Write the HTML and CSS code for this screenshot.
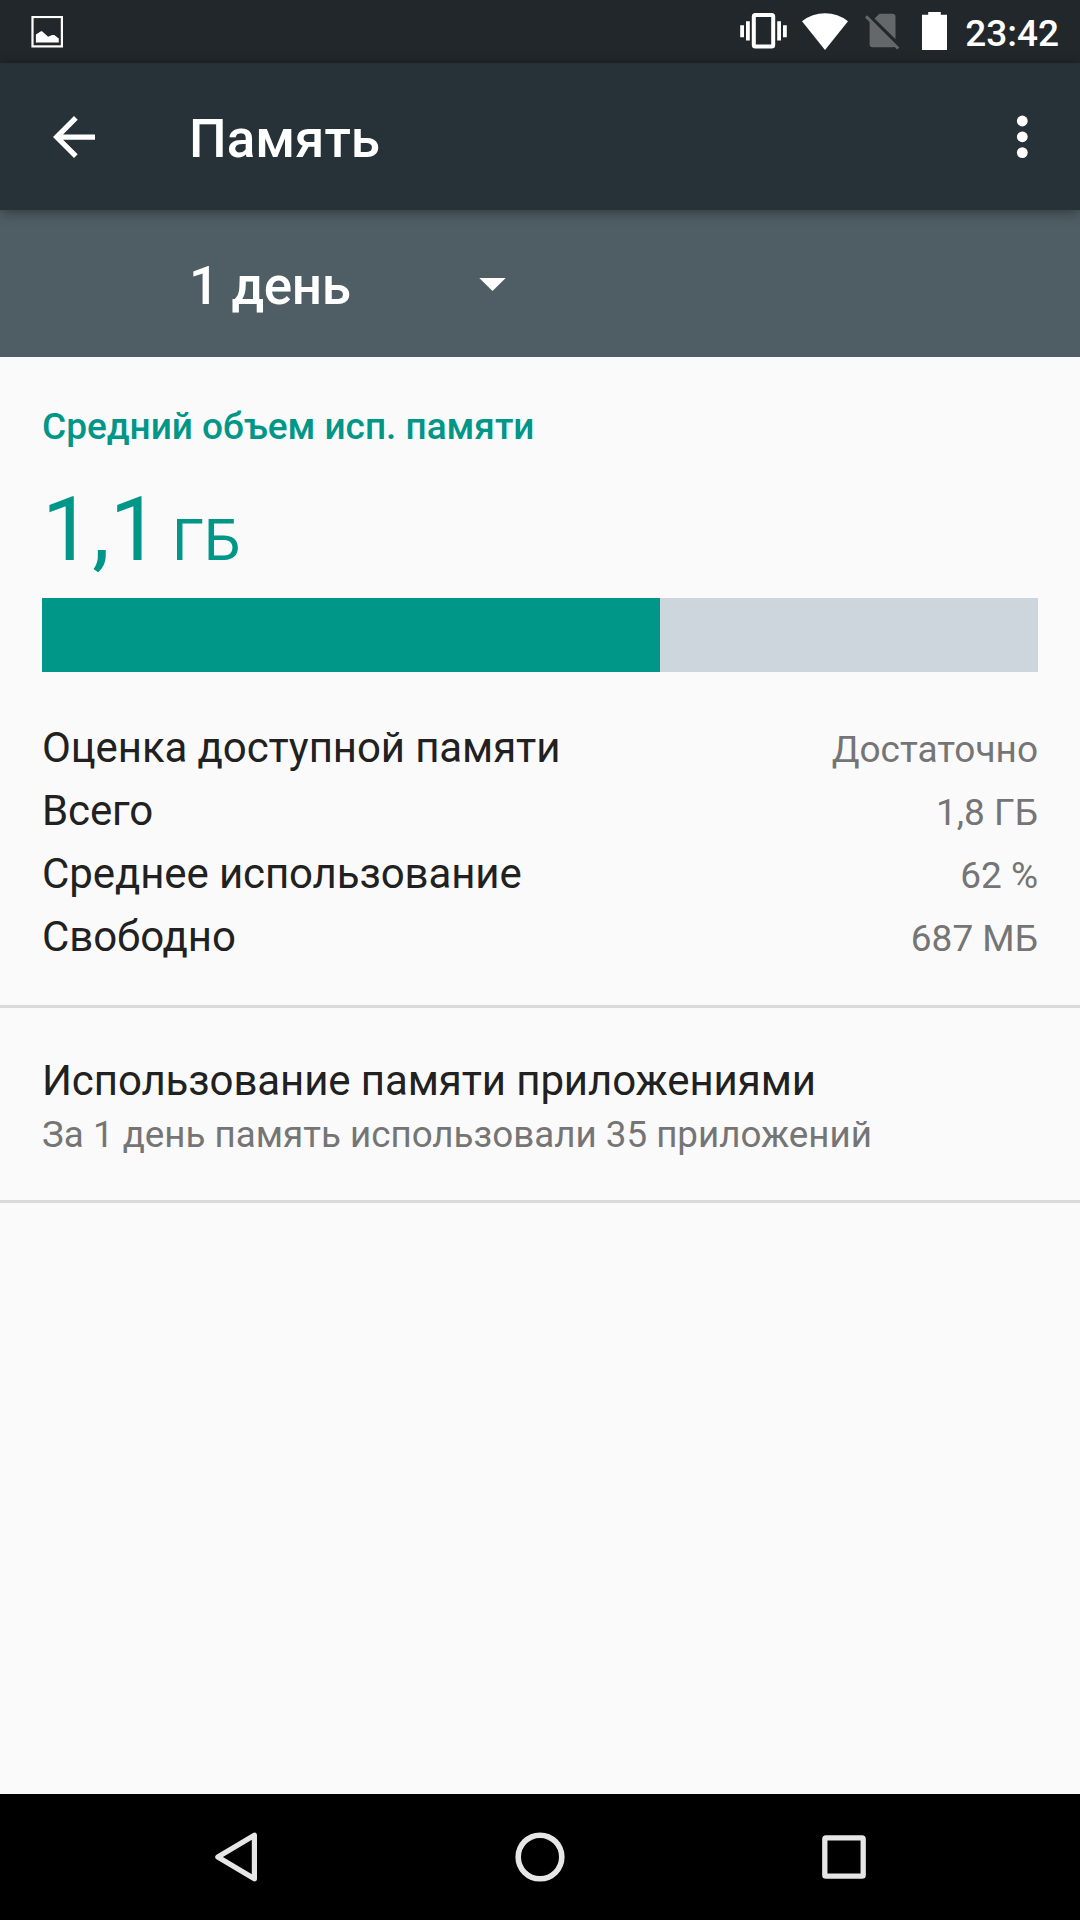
FILE: index.html
```html
<!DOCTYPE html>
<html lang="ru">
  <head>
    <meta charset="utf-8" />
    <meta name="viewport" content="width=device-width, initial-scale=1" />
    <title>Память</title>
    <link rel="stylesheet" href="styles.css">
  </head>
  <body>
    <div class="screen">
      <!-- Status bar -->
      <div class="status-bar">
        <svg class="status-picture" width="32" height="32" viewBox="0 0 32 32">
          <rect x="1.5" y="1" width="29.4" height="29.4" fill="none" stroke="#fff" stroke-width="2.2" />
          <path d="M4.9 26.4V18.6L10 15.2H11L17.2 20.8L21 19H23.2L27.8 22.4V26.4Z" fill="#fff" />
        </svg>
        <div class="status-icons">
          <svg width="48" height="36" viewBox="0 0 48 36">
            <path d="M0.2 12.2H4V24.2H0.2ZM6 8.3H9.8V27.6H6ZM37.2 8.3H41V27.6H37.2ZM43 12.2H46.8V24.2H43Z" fill="#fff" />
            <rect x="13.8" y="2" width="19.4" height="31.6" rx="1.5" fill="none" stroke="#fff" stroke-width="4" />
          </svg>
          <svg class="wifi" width="46" height="37" viewBox="0 0 46 37">
            <path d="M0 8.2A37 37 0 0 1 46 8.2L23 37Z" fill="#fff" />
          </svg>
          <svg width="35" height="37" viewBox="0 0 35 37">
            <path d="M9.5 5.5L14.5 0.7H27.5Q30.5 0.7 30.5 3.7V26.2Z" fill="#64686b" />
            <path d="M4.6 8.5L30 33.6Q29.3 34.2 28 34.2H7.6Q4.6 34.2 4.6 31.2Z" fill="#64686b" />
            <path d="M1 3.4L33.2 35.5" stroke="#64686b" stroke-width="3" />
          </svg>
          <svg class="battery" width="25" height="38" viewBox="0 0 25 38">
            <path d="M0 2.8H6.2V0H18.8V2.8H25V38H0Z" fill="#fff" />
          </svg>
        </div>
        <div class="clock">23:42</div>
      </div>

      <!-- Toolbar -->
      <div class="toolbar">
        <svg class="back-arrow" width="42" height="42" viewBox="4 4 16 16">
          <path d="M20 11H7.83l5.59-5.59L12 4l-8 8 8 8 1.41-1.41L7.83 13H20v-2z" fill="#fff" />
        </svg>
        <h1 class="title">Память</h1>
        <svg class="overflow" width="12" height="44" viewBox="0 0 12 44">
          <circle cx="6.3" cy="6" r="5.4" fill="#fff" />
          <circle cx="6.3" cy="21.8" r="5.4" fill="#fff" />
          <circle cx="6.3" cy="37.6" r="5.4" fill="#fff" />
        </svg>
      </div>

      <!-- Period selector -->
      <div class="period">
        <span class="period-label">1 день</span>
        <svg class="caret" width="27" height="13" viewBox="0 0 27 13">
          <path d="M0.3 0H26.7L13.5 13Z" fill="#fff" />
        </svg>
      </div>

      <main class="content">
        <section class="summary">
          <h2 class="category">Средний объем исп. памяти</h2>
          <div class="usage">1,1<span class="unit">ГБ</span></div>
          <div class="bar"><div class="bar-fill" style="width: 62%"></div></div>
          <div class="row"><span>Оценка доступной памяти</span><span class="value">Достаточно</span></div>
          <div class="row"><span>Всего</span><span class="value">1,8 ГБ</span></div>
          <div class="row"><span>Среднее использование</span><span class="value">62 %</span></div>
          <div class="row"><span>Свободно</span><span class="value">687 МБ</span></div>
        </section>
        <section class="apps">
          <div class="apps-title">Использование памяти приложениями</div>
          <div class="apps-summary">За 1 день память использовали 35 приложений</div>
        </section>
      </main>

      <!-- Navigation bar -->
      <nav class="nav-bar">
        <svg width="50" height="50" viewBox="0 0 50 50">
          <path d="M43.4 3.2V46.8L6.8 25Z" fill="none" stroke="#e6e6e6" stroke-width="5.2" stroke-linejoin="round" />
        </svg>
        <svg width="50" height="50" viewBox="0 0 50 50">
          <circle cx="25" cy="25" r="21.8" fill="none" stroke="#e6e6e6" stroke-width="5.6" />
        </svg>
        <svg width="50" height="50" viewBox="0 0 50 50">
          <rect x="5.8" y="5.8" width="38.4" height="38.4" rx="1.2" fill="none" stroke="#e6e6e6" stroke-width="5.3" />
        </svg>
      </nav>
    </div>
  </body>
</html>
```
FILE: styles.css
```css
body {
  margin: 0;
  font-family: Roboto, "Noto Sans", sans-serif;
  color: #212121;
}

.screen {
  width: 1080px;
  height: 1920px;
  display: flex;
  flex-direction: column;
  background: #fafafa;
  overflow: hidden;
}

.status-bar {
  height: 63px;
  box-sizing: border-box;
  padding: 0 21px 0 31px;
  display: flex;
  align-items: center;
  background: #22272b;
}

.status-icons {
  display: flex;
  align-items: center;
  gap: 15px;
  margin: -1px 0 0 auto;
}

.wifi {
  margin: 0 2px 0 -1px;
}

.battery {
  margin-left: 7px;
}

.clock {
  margin-left: 18px;
  color: #fff;
  font-size: 37px;
  font-weight: 500;
  line-height: 43px;
  padding-top: 4px;
}

.toolbar {
  height: 147px;
  box-sizing: border-box;
  padding: 0 52px 0 53px;
  display: flex;
  align-items: center;
  background: #263238;
  box-shadow: 0 2px 12px rgba(0, 0, 0, 0.4);
  z-index: 1;
}

.title {
  margin: 5px 0 0 94px;
  color: #fff;
  font-size: 53px;
  font-weight: 500;
  line-height: 62px;
}

.overflow {
  margin-left: auto;
}

.period {
  height: 147px;
  display: flex;
  align-items: center;
  padding-left: 189px;
  background: #4f5d64;
  color: #fff;
}

.period-label {
  width: 290px;
  font-size: 53px;
  font-weight: 500;
  line-height: 62px;
  letter-spacing: -0.4px;
  padding-top: 5px;
}

.caret {
  margin-top: 2px;
}

.content {
  flex: 1;
}

.summary {
  height: 651px;
  box-sizing: border-box;
  padding: 48px 42px 0;
  border-bottom: 3px solid #dadada;
}

.category {
  margin: 0;
  color: #009688;
  font-size: 37px;
  font-weight: 500;
  line-height: 43px;
}

.usage {
  margin-top: 29px;
  height: 121px;
  color: #009688;
  font-size: 89.25px;
  line-height: 105px;
}

.unit {
  margin-left: 12px;
  font-size: 57.75px;
}

.bar {
  height: 74px;
  margin-bottom: 44px;
  background: #ced6dd;
}

.bar-fill {
  height: 100%;
  background: #009688;
}

.row {
  height: 63px;
  display: flex;
  justify-content: space-between;
  align-items: baseline;
  font-size: 42px;
  line-height: 63px;
  letter-spacing: -0.1px;
}

.value {
  color: #757575;
  font-size: 37px;
  letter-spacing: 0;
}

.apps {
  height: 195px;
  box-sizing: border-box;
  padding: 47px 42px 0;
  border-bottom: 3px solid #dadada;
}

.apps-title {
  font-size: 42px;
  line-height: 52px;
  letter-spacing: -0.1px;
}

.apps-summary {
  margin-top: 2px;
  color: #757575;
  font-size: 36.75px;
  line-height: 52px;
}

.nav-bar {
  height: 126px;
  display: flex;
  align-items: center;
  justify-content: center;
  gap: 254px;
  background: #000;
}
```
